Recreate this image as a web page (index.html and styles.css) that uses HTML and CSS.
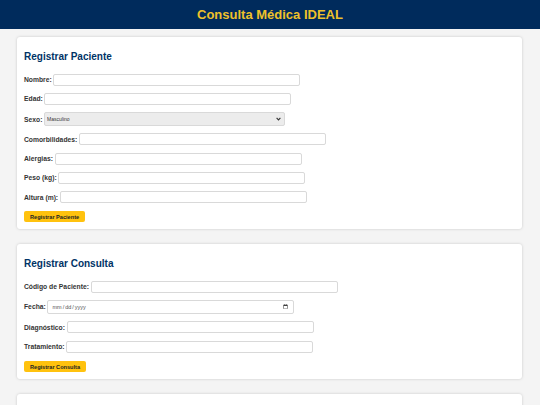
FILE: index.html
```html
<!DOCTYPE html>
<html lang="es">
<head>
<meta charset="utf-8">
<title>Consulta Médica IDEAL</title>
<link rel="stylesheet" href="styles.css">
</head>
<body>
<header class="topbar">
  <h1 class="title">Consulta Médica IDEAL</h1>
</header>
<main class="page">
  <section class="card">
    <h2 class="card-title">Registrar Paciente</h2>
    <form class="form">
      <div class="row"><label class="lbl">Nombre:</label><input class="field" type="text"></div>
      <div class="row"><label class="lbl">Edad:</label><input class="field" type="text"></div>
      <div class="row"><label class="lbl">Sexo:</label>
        <div class="select-wrap">
          <select class="field select"><option>Masculino</option><option>Femenino</option></select>
          <svg class="select-arrow" width="5" height="4" viewBox="0 0 5 4"><path d="M0.6 0.8 L2.5 2.9 L4.4 0.8" fill="none" stroke="#333" stroke-width="1.1"/></svg>
        </div>
      </div>
      <div class="row"><label class="lbl">Comorbilidades:</label><input class="field" type="text"></div>
      <div class="row"><label class="lbl">Alergias:</label><input class="field" type="text"></div>
      <div class="row"><label class="lbl">Peso (kg):</label><input class="field" type="text"></div>
      <div class="row"><label class="lbl">Altura (m):</label><input class="field" type="text"></div>
      <div class="actions"><button class="btn" type="button">Registrar Paciente</button></div>
    </form>
  </section>
  <section class="card">
    <h2 class="card-title">Registrar Consulta</h2>
    <form class="form form-loose">
      <div class="row"><label class="lbl">Código de Paciente:</label><input class="field" type="text"></div>
      <div class="row"><label class="lbl">Fecha:</label><input class="field date" type="date"></div>
      <div class="row"><label class="lbl">Diagnóstico:</label><input class="field" type="text"></div>
      <div class="row"><label class="lbl">Tratamiento:</label><input class="field" type="text"></div>
      <div class="actions"><button class="btn" type="button">Registrar Consulta</button></div>
    </form>
  </section>
  <section class="card">
    <h2 class="card-title">Buscar Paciente</h2>
    <form class="form">
      <div class="row"><label class="lbl">Código de Paciente:</label><input class="field" type="text"></div>
      <div class="actions"><button class="btn" type="button">Buscar</button></div>
    </form>
  </section>
</main>
</body>
</html>
```
FILE: styles.css
```css
* { box-sizing: border-box; }
html, body { margin: 0; padding: 0; }
body {
  background: #f4f4f4;
  font-family: "Liberation Sans", Arial, sans-serif;
  color: #333;
}
.topbar {
  background: #002b5c;
  height: 29px;
  display: flex;
  align-items: center;
  justify-content: center;
}
.title {
  margin: 0;
  font-size: 13px;
  line-height: 15px;
  font-weight: bold;
  color: #efc12a;
}
.page {
  padding: 8px 18px 0 17px;
}
.card {
  background: #fff;
  border-radius: 3px;
  box-shadow: 0 0 3px rgba(0, 0, 0, 0.18);
  padding: 10px 7px 7px;
  margin-bottom: 15px;
}
.card-title {
  margin: 4px 0 10.5px;
  font-size: 10px;
  line-height: 12px;
  font-weight: bold;
  color: #003366;
}
.form {
  display: flex;
  flex-direction: column;
  gap: 7.3px;
  margin: 0;
}
.form-loose {
  gap: 7.6px;
}
.row {
  display: flex;
  align-items: center;
  gap: 1.7px;
}
.lbl {
  font-size: 6.75px;
  font-weight: bold;
  color: #333;
  white-space: nowrap;
}
.field {
  width: 247px;
  height: 12px;
  border: 1px solid #d9d9d9;
  border-radius: 2px;
  padding: 0 3px;
  font-family: "Liberation Sans", Arial, sans-serif;
  font-size: 5px;
  color: #333;
  background: #fff;
  margin: 0;
}
.select-wrap {
  position: relative;
  display: flex;
}
.select {
  width: 241px;
  height: 14px;
  background: #ececec;
  padding: 0 2px;
  -webkit-appearance: none;
  appearance: none;
}
.select-arrow {
  position: absolute;
  right: 4px;
  top: 5px;
}
.date {
  height: 13.4px;
  font-size: 5.5px;
  color: #555;
}
.actions {
  display: flex;
  padding-top: 0.6px;
}
.btn {
  height: 11px;
  padding: 0 6px;
  border: none;
  border-radius: 2px;
  background: #ffc20e;
  color: #222;
  font-family: "Liberation Sans", Arial, sans-serif;
  font-size: 5.6px;
  font-weight: bold;
  cursor: pointer;
}
```
